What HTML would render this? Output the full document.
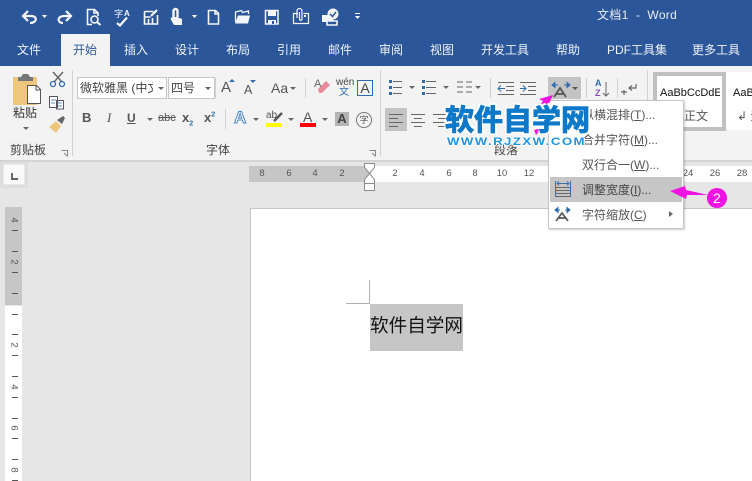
<!DOCTYPE html>
<html><head><meta charset="utf-8"><style>
html,body{margin:0;padding:0}
body{width:752px;height:481px;overflow:hidden;position:relative;background:#e6e6e6;font-family:"Liberation Sans","Noto Sans CJK SC",sans-serif;}
.a{position:absolute}
.t{position:absolute;white-space:nowrap;line-height:16px}
.tab{position:absolute;top:42px;color:#f0f3f8;font-size:12px;line-height:16px;white-space:nowrap}
.r{position:absolute;top:167px;font-size:9.500px;line-height:14px;color:#555;width:20px;text-align:center}
.v{position:absolute;left:5px;width:17px;text-align:center;font-size:9.500px;line-height:10px;color:#555;transform:rotate(90deg)}
.m{position:absolute;left:12px;width:6px;height:1px;background:#555}
.l{position:absolute;width:1px;background:#d2d2d2}
svg{position:absolute;overflow:visible}
.lab{position:absolute;font-size:12px;line-height:14px;color:#444;white-space:nowrap}
.mi{position:absolute;left:582px;font-size:12px;line-height:16px;color:#555;white-space:nowrap}
.car{position:absolute;width:0;height:0;border-left:3px solid transparent;border-right:3px solid transparent;border-top:3px solid #666}
</style></head><body>
<!-- title -->
<div class="a" style="left:0;top:0;width:752px;height:66px;background:#2b579a"></div>
<svg style="left:0;top:0" width="752" height="34" fill="none" stroke="#f4f6fa" stroke-width="1.600">
<path d="M24 16 H31 C38 16 37 23 30 23" stroke-width="2.200"/><path d="M28 11l-5 5 5 5" stroke-width="2.200"/>
<path d="M42 15h5l-2.500 3z" fill="#fff" stroke="none"/>
<path d="M70 16 H64 C57 16 57 23 63 23" stroke-width="2.200"/><path d="M66 11l5 5-5 5" stroke-width="2.200"/>
<path d="M92 24.500h-4.500v-15h7l3.500 3.500v3M94 10v3h4"/><circle cx="94.500" cy="19.500" r="3.500"/><path d="M97 22l3.500 3" stroke-width="2"/>
<path d="M117 23l3 2.500 7-8" stroke-width="2.200"/>
<path d="M144.500 11.500h9M144.500 11.500v12.500h13v-9M148.500 24v-5M152.500 24v-6M144.500 17h6"/><path d="M151 16l6-6" stroke-width="2.200"/>
<path d="M173.500 17v-6a2 2 0 0 1 4 0v6" stroke-width="2.400"/><path d="M172 17l-1.500 2 3.500 6h8v-6l-5-2z" fill="#f4f6fa" stroke="none"/>
<path d="M192 15h5l-2.500 3z" fill="#fff" stroke="none"/>
<path d="M208.500 10.500h7l3 3v10.500h-10zM215 10.500v3.500h3.500"/>
<path d="M235.500 22v-10l6-1.500 1 2 6-1.500v3" stroke-width="1.300"/><path d="M235 23.500l3-8h12l-2 8z" fill="#f4f6fa" stroke="none"/>
<path d="M265.500 10.500h12.500v13.500h-12.500z" stroke-width="1.500"/><path d="M268 11h8v5h-8zM268 20h8v4h-8z" fill="#f4f6fa" stroke="none"/><path d="M272 21h2v3h-2z" fill="#2b579a" stroke="none"/>
<path d="M298 13.500h-4.500v10h15v-10h-5" stroke-width="1.200"/><path d="M297 18v-7a2.500 2.500 0 0 1 5 0v8a1 1 0 0 1-2.500 0v-7" stroke-width="1.200"/><path d="M304 15h2v2h-2z" fill="#f4f6fa" stroke="none"/>
<path d="M322 15h6l1 1h4v6h-11z" fill="#f4f6fa" stroke="none"/><circle cx="333" cy="14" r="5.500" fill="#f4f6fa" stroke="none"/><path d="M327 21h10v4h-10z" fill="#2b579a" stroke="#f4f6fa"/><path d="M330 14l2.500 2.500 3.500-4.500" stroke="#2b579a" stroke-width="1.500"/>
<path d="M355 13.500h5" stroke-width="1"/><path d="M355 16h5l-2.500 3z" fill="#fff" stroke="none"/>
</svg>
<div class="t" style="left:114px;top:8px;font-size:9px;line-height:12px;color:#f4f6fa">字</div>
<div class="t" style="left:124px;top:8px;font-size:8px;line-height:12px;font-weight:bold;color:#f4f6fa">A</div>
<div class="t" style="left:597px;top:7px;font-size:12px;color:#e9edf4;letter-spacing:.3px">文档1&nbsp; -&nbsp; Word</div>
<div class="a" style="left:61px;top:34px;width:49px;height:32px;background:#f3f3f3"></div>
<div class="tab" style="left:17px">文件</div>
<div class="tab" style="left:73px;color:#2b579a">开始</div>
<div class="tab" style="left:124px">插入</div>
<div class="tab" style="left:175px">设计</div>
<div class="tab" style="left:226px">布局</div>
<div class="tab" style="left:277px">引用</div>
<div class="tab" style="left:328px">邮件</div>
<div class="tab" style="left:379px">审阅</div>
<div class="tab" style="left:430px">视图</div>
<div class="tab" style="left:481px">开发工具</div>
<div class="tab" style="left:556px">帮助</div>
<div class="tab" style="left:607px">PDF工具集</div>
<div class="tab" style="left:692px">更多工具</div>
<!-- ribbon -->
<div class="a" style="left:0;top:66px;width:752px;height:94px;background:#f3f3f3;border-bottom:2px solid #d4d4d4"></div>
<div class="l" style="left:72px;top:70px;height:86px"></div>
<div class="l" style="left:380px;top:70px;height:86px"></div>
<div class="l" style="left:647px;top:70px;height:86px"></div>
<div class="l" style="left:215px;top:78px;height:20px"></div>
<div class="l" style="left:305px;top:78px;height:20px"></div>
<div class="l" style="left:225px;top:109px;height:20px"></div>
<div class="l" style="left:490px;top:78px;height:20px"></div>
<div class="l" style="left:586px;top:78px;height:20px"></div>
<div class="l" style="left:617px;top:78px;height:20px"></div>
<!-- clipboard -->
<svg style="left:0;top:0" width="80" height="160" fill="none">
<path d="M13 77h24v28H13z" fill="#eec67e"/><path d="M18 77h3l2-3h5l2 3h3v4H18z" fill="#777"/>
<path d="M27.500 85.500h9l4 4v14h-13z" fill="#fff" stroke="#555"/><path d="M36 86v4h4" stroke="#555"/>
<path d="M53 72l9 10M63 72l-9 10" stroke="#666" stroke-width="1.500"/><circle cx="53" cy="84" r="2.500" stroke="#2f6cae" stroke-width="1.300"/><circle cx="62" cy="84" r="2.500" stroke="#2f6cae" stroke-width="1.300"/>
<path d="M49.500 96.500h8v11h-8zM56.500 100.500h7v8.500h-7z" fill="#fff" stroke="#556" stroke-width="1"/><path d="M51 100h5M51 103h4M58 103h4M58 106h4" stroke="#2f6cae" stroke-width=".8"/>
<path d="M49 127l7-6 5 5-5 7z" fill="#eec67e"/><path d="M57 120l6-4 2 2-3 6z" fill="#666"/>
</svg>
<div class="t" style="left:13px;top:105px;font-size:12px;color:#333">粘贴</div>
<div class="car" style="left:23px;top:127px"></div>
<div class="lab" style="left:10px;top:143px;color:#444">剪贴板</div>
<div class="lab" style="left:206px;top:143px">字体</div>
<svg style="left:0;top:0" width="752" height="160" fill="none" stroke="#888" stroke-width="1">
<path d="M61.500 150.500h6v6M64 153l3 3" /><path d="M369.500 150.500h6v6M372 153l3 3"/>
</svg>
<!-- font boxes -->
<div class="a" style="left:77px;top:77px;width:90px;height:22px;background:#fff;border:1px solid #c6c6c6;box-sizing:border-box"></div>
<div class="a" style="left:168px;top:77px;width:47px;height:22px;background:#fff;border:1px solid #c6c6c6;box-sizing:border-box"></div>
<div class="t" style="left:80px;top:80px;width:73px;overflow:hidden;font-size:12px;color:#444">微软雅黑 (中文</div>
<div class="t" style="left:171px;top:80px;font-size:12px;color:#444">四号</div>
<div class="car" style="left:158px;top:87px"></div>
<div class="car" style="left:205px;top:87px"></div>
<!-- font row1 -->
<div class="t" style="left:221px;top:80px;font-size:15px;color:#555">A</div>
<svg style="left:0;top:0" width="400" height="160"><path d="M229 82l3-3 3 3z" fill="#2f6cae"/><path d="M250 80l3 3 3-3z" fill="#2f6cae"/></svg>
<div class="t" style="left:244px;top:82px;font-size:12.500px;color:#555">A</div>
<div class="t" style="left:271px;top:80px;font-size:14px;color:#555">Aa</div>
<div class="car" style="left:290px;top:87px"></div>
<svg style="left:0;top:0" width="400" height="160"><path d="M318 89l8-8 4 4-8 8h-3z" fill="#e98a9b"/></svg>
<div class="t" style="left:314px;top:76px;font-size:11px;color:#666">A</div>
<div class="t" style="left:336px;top:77px;font-size:10px;color:#444;line-height:11px">wén</div>
<div class="t" style="left:339px;top:87px;font-size:10px;color:#2f6cae;line-height:11px">文</div>
<div class="a" style="left:357px;top:80px;width:16px;height:16px;border:1px solid #2f6cae;box-sizing:border-box;font-size:14px;line-height:14px;text-align:center;color:#444">A</div>
<!-- font row2 -->
<div class="t" style="left:82px;top:110px;font-size:13px;font-weight:bold;color:#555">B</div>
<div class="t" style="left:107px;top:110px;font-size:13px;font-style:italic;font-family:'Liberation Serif',serif;color:#555">I</div>
<div class="t" style="left:127px;top:110px;font-size:12px;font-weight:bold;color:#555;text-decoration:underline">U</div>
<div class="car" style="left:147px;top:118px"></div>
<div class="t" style="left:158px;top:110px;font-size:11px;color:#555;text-decoration:line-through">abc</div>
<div class="t" style="left:182px;top:110px;font-size:13px;font-weight:bold;color:#555">x<sub style="font-size:7px;color:#2f6cae;line-height:0">2</sub></div>
<div class="t" style="left:204px;top:110px;font-size:13px;font-weight:bold;color:#555">x<sup style="font-size:7px;color:#2f6cae;line-height:0">2</sup></div>
<div class="t" style="left:234px;top:110px;font-size:17px;font-weight:bold;color:#fff;-webkit-text-stroke:1px #4a86c4">A</div>
<div class="car" style="left:253px;top:118px"></div>
<div class="t" style="left:266px;top:110px;font-size:10px;color:#555;line-height:12px">ab</div>
<svg style="left:0;top:0" width="400" height="160"><path d="M274 121l8-8" stroke="#555" stroke-width="2.500"/></svg>
<div class="a" style="left:266px;top:123px;width:16px;height:4px;background:#ffff00"></div>
<div class="car" style="left:288px;top:118px"></div>
<div class="t" style="left:303px;top:109px;font-size:14px;color:#555">A</div>
<div class="a" style="left:300px;top:123px;width:16px;height:4px;background:#f00"></div>
<div class="car" style="left:322px;top:118px"></div>
<div class="a" style="left:335px;top:112px;width:14px;height:14px;background:#b4b4b4;font-size:13px;line-height:14px;text-align:center;color:#444;font-weight:bold">A</div>
<div class="a" style="left:356px;top:112px;width:16px;height:16px;border:1px solid #777;border-radius:50%;box-sizing:border-box;font-size:9px;line-height:14px;text-align:center;color:#555">字</div>
<!-- paragraph -->
<svg style="left:0;top:0" width="752" height="160" fill="none" stroke="#666" stroke-width="1">
<path d="M393 81.500h9M393 87.500h9M393 93.500h9M426 81.500h10M426 87.500h10M426 93.500h10M498 82.500h16M506 86.500h8M506 90.500h8M498 94.500h16M520 82.500h16M528 86.500h8M528 90.500h8M520 94.500h16"/>
<path d="M389 80h3v3h-3zM389 86h3v3h-3zM389 92h3v3h-3zM422 80h3v3h-3zM422 86h3v3h-3zM422 92h3v3h-3z" fill="#2f6cae" stroke="none"/>
<path d="M505 88.500h-7m3-3l-3 3 3 3M520 88.500h6m-3-3l3 3-3 3" stroke="#2f6cae"/>
<path d="M409 86l3 3 3-3" fill="#666" stroke="none"/><path d="M443 86l3 3 3-3" fill="#666" stroke="none"/><path d="M475 86l3 3 3-3" fill="#666" stroke="none"/>
<path d="M457 82h6M457 87h6M457 92h6M466 82h6M466 87h6M466 92h6"/>
</svg>
<div class="a" style="left:385px;top:108px;width:22px;height:23px;background:#c4c4c4"></div>
<svg style="left:0;top:0" width="752" height="160" fill="none" stroke="#666" stroke-width="1">
<path d="M389 114.500h14M389 118.500h9M389 122.500h14M389 126.500h9M411 114.500h14M414 118.500h8M411 122.500h14M414 126.500h8M433 114.500h14M438 118.500h9M433 122.500h14M438 126.500h9"/>
</svg>
<div class="a" style="left:548px;top:77px;width:33px;height:22px;background:#c4c4c4"></div>
<svg style="left:0;top:0" width="752" height="160" fill="none">
<path d="M552 85l3-2.500v5zM570 85l-3-2.500v5zM555 85h3M564 85h3" fill="#2f6cae" stroke="#2f6cae"/>
<path d="M554 97l6-9 6 9M556 94h8" stroke="#555" stroke-width="1.800"/>
<path d="M572 87h6l-3 3z" fill="#555"/>
<path d="M606 82v14M603 93l3 3 3-3" stroke="#666" stroke-width="1"/>
<path d="M636 84v4h-7M632 85.500l-3 2.500 3 2.500M627 92h-6M624 90v5" stroke="#666" stroke-width="1.200"/>
</svg>
<div class="t" style="left:595px;top:78px;font-size:9px;color:#2f6cae;font-weight:bold;line-height:10px">A</div>
<div class="t" style="left:595px;top:88px;font-size:9px;color:#8a4fbb;font-weight:bold;line-height:10px">Z</div>
<div class="lab" style="left:494px;top:143px;color:#444;font-size:12px">段落</div>
<!-- styles -->
<div class="a" style="left:653px;top:72px;width:99px;height:58px;background:#fff"></div>
<div class="a" style="left:653px;top:72px;width:73px;height:59px;background:#fff;border:4px solid #c0c0c0;box-sizing:border-box"></div>
<div class="t" style="left:660px;top:85px;width:60px;overflow:hidden;font-size:11px;color:#111">AaBbCcDdE</div>
<div class="t" style="left:733px;top:85px;font-size:11px;color:#111">AaB</div>
<div class="t" style="left:684px;top:108px;font-size:12px;color:#555">正文</div>
<div class="t" style="left:737px;top:108px;font-size:12px;color:#555">↲ 无</div>
<!-- h ruler -->
<div class="a" style="left:0;top:162px;width:752px;height:319px;background:#e6e6e6"></div>
<div class="a" style="left:249px;top:166px;width:120px;height:16px;background:#c6c6c6"></div>
<div class="a" style="left:369px;top:166px;width:383px;height:16px;background:#fff"></div>
<div class="r" style="left:252px">8</div><div class="r" style="left:279px">6</div><div class="r" style="left:305px">4</div><div class="r" style="left:332px">2</div>
<div class="r" style="left:385px">2</div><div class="r" style="left:412px">4</div><div class="r" style="left:439px">6</div><div class="r" style="left:465px">8</div><div class="r" style="left:492px">10</div><div class="r" style="left:519px">12</div><div class="r" style="left:678px">24</div><div class="r" style="left:705px">26</div><div class="r" style="left:732px">28</div>
<svg style="left:0;top:0" width="752" height="200" fill="#fff" stroke="#8a8a8a" stroke-width="1">
<path d="M364.500 163.500h10v4l-5 6-5-6z"/><path d="M369.500 173.500l5 6v4h-10v-4z"/><path d="M364.500 183.500h10v7h-10z"/>
</svg>
<!-- corner -->
<div class="a" style="left:0;top:162px;width:28px;height:26px;background:#dedede"></div>
<div class="a" style="left:3px;top:164px;width:22px;height:21px;background:#fafafa;border:1px solid #e8e8e8;box-sizing:border-box"></div>
<div class="a" style="left:11px;top:173px;width:7px;height:7px;border-left:2px solid #666;border-bottom:2px solid #666;box-sizing:border-box"></div>
<!-- v ruler -->
<div class="a" style="left:5px;top:207px;width:17px;height:98px;background:#c6c6c6"></div>
<div class="a" style="left:5px;top:306px;width:17px;height:175px;background:#fff"></div>
<div class="v" style="top:215px">4</div><div class="v" style="top:257px">2</div><div class="v" style="top:340px">2</div><div class="v" style="top:382px">4</div><div class="v" style="top:423px">6</div><div class="v" style="top:465px">8</div>
<div class="m" style="top:230px"></div><div class="m" style="top:251px"></div><div class="m" style="top:272px"></div><div class="m" style="top:293px"></div><div class="m" style="top:314px"></div><div class="m" style="top:334px"></div><div class="m" style="top:355px"></div><div class="m" style="top:376px"></div><div class="m" style="top:397px"></div><div class="m" style="top:418px"></div><div class="m" style="top:438px"></div><div class="m" style="top:459px"></div><div class="m" style="top:480px"></div>
<!-- page -->
<div class="a" style="left:250px;top:208px;width:502px;height:273px;background:#fff;border-left:1px solid #c4c4c4;border-top:1px solid #c4c4c4;box-sizing:border-box"></div>
<div class="a" style="left:369px;top:280px;width:1px;height:23px;background:#b0b0b0"></div>
<div class="a" style="left:346px;top:303px;width:24px;height:1px;background:#b0b0b0"></div>
<div class="a" style="left:370px;top:304px;width:93px;height:47px;background:#c6c6c6"></div>
<div class="t" style="left:370px;top:315px;font-size:18.600px;line-height:22px;color:#111">软件自学网</div>
<!-- menu -->
<div class="a" style="left:548px;top:100px;width:136px;height:129px;background:#fff;border:1px solid #c6c6c6;box-sizing:border-box;box-shadow:1px 1px 2px rgba(0,0,0,.2)"></div>
<div class="a" style="left:550px;top:177px;width:132px;height:25px;background:#c6c6c6"></div>
<div class="mi" style="left:582px;top:107px">纵横混排(<u>T</u>)...</div>
<div class="mi" style="left:582px;top:132px">合并字符(<u>M</u>)...</div>
<div class="mi" style="top:157px">双行合一(<u>W</u>)...</div>
<div class="mi" style="top:182px;color:#444">调整宽度(<u>I</u>)...</div>
<div class="mi" style="top:207px">字符缩放(<u>C</u>)</div>
<svg style="left:0;top:0" width="752" height="481" fill="none">
<path d="M556 187.500h14M556 190.500h14M556 193.500h14M556 196.500h14" stroke="#666"/>
<path d="M555.500 181v16M570.500 181v16M557 183.500h12M559 181.500l-2 2 2 2M567 181.500l2 2-2 2" stroke="#3a70aa"/>
<path d="M669 211l4 3-4 3z" fill="#666"/>
<path d="M555 210l3-2.500v5zM570 210l-3-2.500v5zM558 210h2M565 210h2" fill="#2f6cae" stroke="#2f6cae"/>
<path d="M556 221l6-8 6 8M558 218h8" stroke="#555" stroke-width="1.700"/>
</svg>
<!-- arrows -->
<svg style="left:0;top:0" width="752" height="481">
<path d="M553 95l-5 11-3-3-7 5 5-7-4-2z" fill="#f012e0"/>
<path d="M534 130l8-2-6 7z" fill="#f012e0"/>
<path d="M670 191l15-5 1 4 22 5-21 0-1 4z" fill="#f012e0"/>
<circle cx="717" cy="198" r="10" fill="#f012e0"/>
</svg>
<div class="t" style="left:713px;top:190px;font-size:14px;color:#fff">2</div>
<!-- watermark -->
<div class="t" style="left:445px;top:103px;font-size:29px;line-height:36px;font-weight:bold;color:#0f79c9;-webkit-text-stroke:1px #0f79c9;text-shadow:1px 0 0 #fff,-1px 0 0 #fff,0 1px 0 #fff,0 -1px 0 #fff,2px 2px 0 #fff,-2px -2px 0 #fff,2px -2px 0 #fff,-2px 2px 0 #fff">软件自学网</div>
<div class="t" style="left:447px;top:134px;font-size:11px;line-height:16px;font-weight:bold;color:#1b95e0;letter-spacing:1.200px;transform:scaleX(1.2);transform-origin:left;text-shadow:1px 0 0 #fff,-1px 0 0 #fff,0 1px 0 #fff,0 -1px 0 #fff">WWW.RJZXW.COM</div>
</body></html>
